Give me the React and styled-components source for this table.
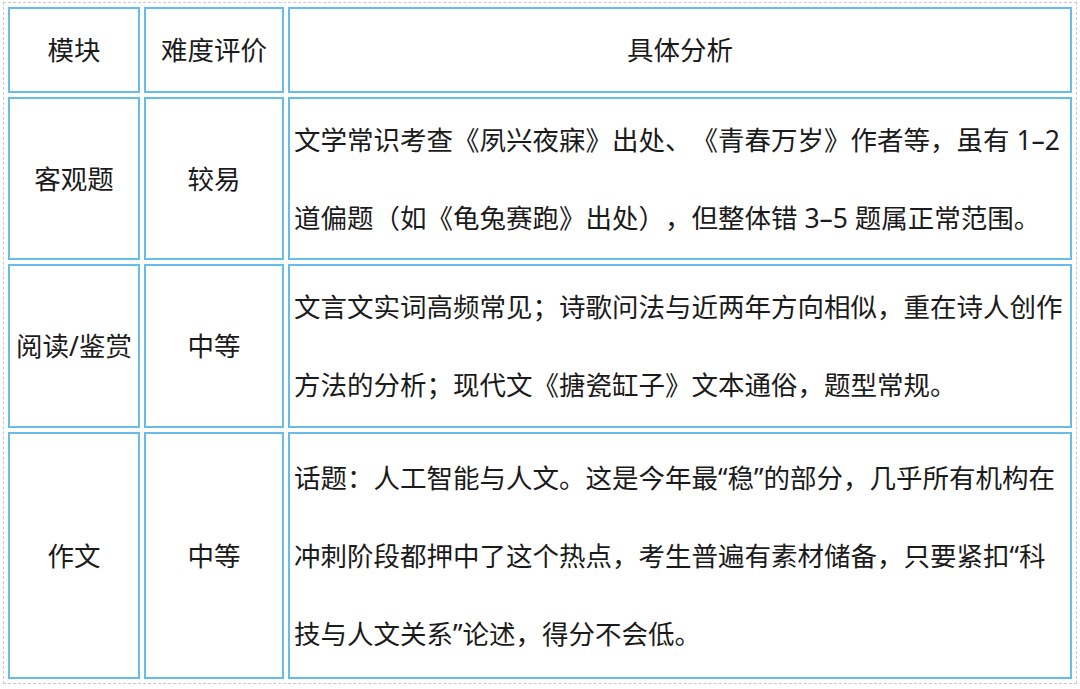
import React from "react";
import styled, { createGlobalStyle } from "styled-components";

const GlobalStyle = createGlobalStyle`
  html, body {
    margin: 0;
    padding: 0;
    background: #ffffff;
  }
  body {
    font-family: "Noto Sans", "Noto Sans CJK SC", sans-serif;
    color: #1b1b1b;
  }
`;

const Frame = styled.div`
  margin: 2px 0 0 3px;
  width: 1074px;
  box-sizing: border-box;
  border: 1px dashed #c9c9c9;
`;

const Table = styled.table`
  width: 100%;
  border-collapse: separate;
  border-spacing: 4px;
  table-layout: fixed;
`;

const Cell = styled.td`
  box-sizing: border-box;
  height: ${(p) => p.$h}px;
  border: 2px solid #66bde9;
  padding: 0 4px;
  font-size: 26.5px;
  line-height: 78px;
  text-align: ${(p) => (p.$left ? "left" : "center")};
  vertical-align: middle;
  white-space: nowrap;
  overflow: hidden;
  text-spacing-trim: space-all;
`;

const Line = styled.span`
  display: block;
`;

const rows = [
  {
    h: 163,
    name: "客观题",
    level: "较易",
    lines: [
      "文学常识考查《夙兴夜寐》出处、《青春万岁》作者等，虽有 1–2",
      "道偏题（如《龟兔赛跑》出处），但整体错 3–5 题属正常范围。",
    ],
  },
  {
    h: 164,
    name: "阅读/鉴赏",
    level: "中等",
    lines: [
      "文言文实词高频常见；诗歌问法与近两年方向相似，重在诗人创作",
      "方法的分析；现代文《搪瓷缸子》文本通俗，题型常规。",
    ],
  },
  {
    h: 247,
    name: "作文",
    level: "中等",
    lines: [
      "话题：人工智能与人文。这是今年最“稳”的部分，几乎所有机构在",
      "冲刺阶段都押中了这个热点，考生普遍有素材储备，只要紧扣“科",
      "技与人文关系”论述，得分不会低。",
    ],
  },
];

export default function App() {
  return (
    <>
      <GlobalStyle />
      <Frame>
        <Table>
          <colgroup>
            <col style={{ width: 132 }} />
            <col style={{ width: 140 }} />
            <col />
          </colgroup>
          <tbody>
            <tr>
              <Cell $h={86}>模块</Cell>
              <Cell $h={86}>难度评价</Cell>
              <Cell $h={86}>具体分析</Cell>
            </tr>
            {rows.map((r) => (
              <tr key={r.name}>
                <Cell $h={r.h}>{r.name}</Cell>
                <Cell $h={r.h}>{r.level}</Cell>
                <Cell $h={r.h} $left>
                  {r.lines.map((l) => (
                    <Line key={l}>{l}</Line>
                  ))}
                </Cell>
              </tr>
            ))}
          </tbody>
        </Table>
      </Frame>
    </>
  );
}
